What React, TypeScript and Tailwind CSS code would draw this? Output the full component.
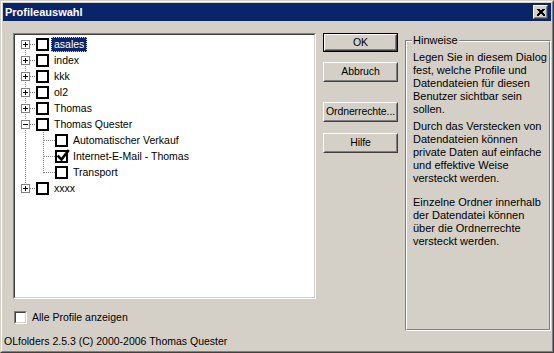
import React from "react";

type Node = {
  label: string;
  level: 0 | 1;
  expander?: "plus" | "minus";
  checked?: boolean;
  selected?: boolean;
  last?: boolean;
  first?: boolean;
  lastChild?: boolean;
};

const nodes: Node[] = [
  { label: "asales", level: 0, expander: "plus", selected: true, first: true },
  { label: "index", level: 0, expander: "plus" },
  { label: "kkk", level: 0, expander: "plus" },
  { label: "ol2", level: 0, expander: "plus" },
  { label: "Thomas", level: 0, expander: "plus" },
  { label: "Thomas Quester", level: 0, expander: "minus" },
  { label: "Automatischer Verkauf", level: 1 },
  { label: "Internet-E-Mail - Thomas", level: 1, checked: true },
  { label: "Transport", level: 1, lastChild: true },
  { label: "xxxx", level: 0, expander: "plus", last: true },
];

const dots = { stroke: "#808080", strokeWidth: 1, strokeDasharray: "1 1", shapeRendering: "crispEdges" as const };

function Connector({ node }: { node: Node }) {
  const w = node.level === 0 ? 21 : 40;
  return (
    <svg width={w} height={16} className="shrink-0">
      {/* root vertical line */}
      <line x1={10.5} x2={10.5} y1={node.first ? 8 : 0} y2={node.last ? 8 : 16} {...dots} />
      {node.level === 0 ? (
        <>
          <line x1={15} x2={21} y1={8.5} y2={8.5} {...dots} />
          <rect x={6.5} y={4.5} width={8} height={8} fill="#fff" stroke="#808080" shapeRendering="crispEdges" />
          <line x1={8} x2={13} y1={8.5} y2={8.5} stroke="#000" shapeRendering="crispEdges" />
          {node.expander === "plus" && (
            <line x1={10.5} x2={10.5} y1={6} y2={11} stroke="#000" shapeRendering="crispEdges" />
          )}
        </>
      ) : (
        <>
          <line x1={28.5} x2={28.5} y1={0} y2={node.lastChild ? 9 : 16} {...dots} />
          <line x1={29} x2={40} y1={8.5} y2={8.5} {...dots} />
        </>
      )}
    </svg>
  );
}

function TreeCheck({ checked }: { checked?: boolean }) {
  return (
    <div className="relative w-[13px] h-[13px] shrink-0 border-2 border-black bg-white">
      {checked && (
        <svg width={14} height={14} viewBox="0 0 14 14" className="absolute left-[-1px] top-[-3px]">
          <path d="M2.5 7.5 L5.5 10.5 L12 2" fill="none" stroke="#000" strokeWidth={2.6} strokeLinecap="square" />
        </svg>
      )}
    </div>
  );
}

function Button({ children, isDefault }: { children: React.ReactNode; isDefault?: boolean }) {
  const bevel = (
    <div className="h-full border border-t-white border-l-white border-r-[#404040] border-b-[#404040]">
      <div className="h-full border border-t-[#d4d0c8] border-l-[#d4d0c8] border-r-[#808080] border-b-[#808080] flex items-center justify-center text-[10.5px] tracking-[-0.1px] text-black whitespace-nowrap">
        {children}
      </div>
    </div>
  );
  return isDefault ? (
    <div className="w-[75px] h-[19px] border border-black">{bevel}</div>
  ) : (
    <div className="w-[75px] h-[20px]">{bevel}</div>
  );
}

function Sunken({ className, children }: { className: string; children?: React.ReactNode }) {
  return (
    <div className={`border border-t-[#808080] border-l-[#808080] border-r-white border-b-white ${className}`}>
      <div className="h-full border border-t-[#404040] border-l-[#404040] border-r-[#d4d0c8] border-b-[#d4d0c8] bg-white">
        {children}
      </div>
    </div>
  );
}

export default function App() {
  return (
    <div className="w-[554px] h-[353px] bg-[#d4d0c8] border border-t-[#d4d0c8] border-l-[#d4d0c8] border-r-[#404040] border-b-[#404040] font-['Liberation_Sans',Arial,sans-serif] text-black select-none">
      <div className="h-full border border-t-white border-l-white border-r-[#808080] border-b-[#808080] p-px flex flex-col">
        {/* title bar */}
        <div className="h-[18px] bg-[#0a246a] flex items-center justify-between pl-[2px] pr-[3px]">
          <span className="text-white font-bold text-[11px] leading-[18px]">Profileauswahl</span>
          <div className="w-[15px] h-[14px] border border-t-white border-l-white border-r-[#404040] border-b-[#404040]">
            <div className="h-full border border-t-[#d4d0c8] border-l-[#d4d0c8] border-r-[#808080] border-b-[#808080] bg-[#d4d0c8] flex items-center justify-center">
              <svg width={8} height={7} viewBox="0 0 8 7">
                <path d="M0.5 0 L7.5 7 M1.5 0 L8.5 7 M7.5 0 L0.5 7 M6.5 0 L-0.5 7" stroke="#000" strokeWidth={1} shapeRendering="crispEdges" />
              </svg>
            </div>
          </div>
        </div>

        {/* body */}
        <div className="flex-1 flex flex-col">
          <div className="flex mt-[12px] pl-[10px]">
            <div className="flex flex-col">
              <Sunken className="w-[303px] h-[266px]">
                <div className="pt-px flex flex-col">
                  {nodes.map((n) => (
                    <div key={n.label} className="flex items-center h-[16px]">
                      <Connector node={n} />
                      <TreeCheck checked={n.checked} />
                      <span
                        className={`ml-[2px] px-[2px] h-[15px] leading-[13px] text-[10.5px] whitespace-nowrap border ${
                          n.selected
                            ? "bg-[#0a246a] text-white border-dotted border-[#e8d890]"
                            : "border-transparent"
                        }`}
                      >
                        {n.label}
                      </span>
                    </div>
                  ))}
                </div>
              </Sunken>
              <div className="flex items-center mt-[12px] pl-[1px] h-[13px]">
                <Sunken className="w-[13px] h-[13px]" />
                <span className="ml-[5px] text-[10.5px] leading-[13px]">Alle Profile anzeigen</span>
              </div>
            </div>

            <div className="flex flex-col ml-[7px]">
              <Button isDefault>OK</Button>
              <div className="mt-[10px]">
                <Button>Abbruch</Button>
              </div>
              <div className="mt-[20px]">
                <Button>Ordnerrechte...</Button>
              </div>
              <div className="mt-[11px]">
                <Button>Hilfe</Button>
              </div>
            </div>

            <div className="relative ml-[7px] mt-[7px] w-[146px] h-[291px] border border-t-[#808080] border-l-[#808080] border-r-white border-b-white">
              <div className="h-full border border-t-white border-l-white border-r-[#808080] border-b-[#808080] pl-[6px] pt-[9px] text-[11px] leading-[13px] whitespace-nowrap">
                <p>
                  Legen Sie in diesem Dialog<br />
                  fest, welche Profile und<br />
                  Datendateien für diesen<br />
                  Benutzer sichtbar sein<br />
                  sollen.
                </p>
                <p className="mt-[4px]">
                  Durch das Verstecken von<br />
                  Datendateien können<br />
                  private Daten auf einfache<br />
                  und effektive Weise<br />
                  versteckt werden.
                </p>
                <p className="mt-[11px]">
                  Einzelne Ordner innerhalb<br />
                  der Datendatei können<br />
                  über die Ordnerrechte<br />
                  versteckt werden.
                </p>
              </div>
              <span className="absolute left-[6px] top-[-7px] px-[1px] bg-[#d4d0c8] text-[11px] leading-[13px]">Hinweise</span>
            </div>
          </div>

          <div className="mt-[4px] pl-[1px] text-[10.5px] leading-[13px] whitespace-nowrap">
            OLfolders 2.5.3 (C) 2000-2006 Thomas Quester
          </div>
        </div>
      </div>
    </div>
  );
}
